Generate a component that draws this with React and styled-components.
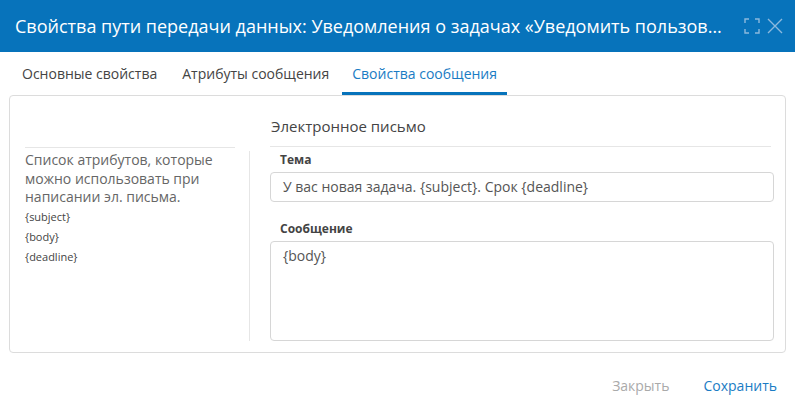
import styled, { createGlobalStyle } from "styled-components";

const GlobalStyle = createGlobalStyle`
    html, body {
        margin: 0;
        padding: 0;
        background: #fff;
    }
    body {
        font-family: "Open Sans", "Liberation Sans", sans-serif;
        color: #444;
    }
`;

const Dialog = styled.div`
    width: 795px;
    height: 409px;
    display: flex;
    flex-direction: column;
    background: #fff;
`;

const Header = styled.div`
    height: 52px;
    display: flex;
    align-items: center;
    justify-content: space-between;
    background: #0773bb;
    padding: 0 12px 0 15px;
    box-sizing: border-box;
`;

const Title = styled.div`
    font-size: 18px;
    font-weight: 500;
    color: #fff;
    white-space: nowrap;
    overflow: hidden;
    text-overflow: ellipsis;
    width: 708px;
`;

const HeaderTools = styled.div`
    display: flex;
    align-items: center;
    gap: 7px;
`;

const ToolButton = styled.div`
    display: flex;
    align-items: center;
    justify-content: center;
    width: 16px;
    height: 16px;
`;

const Tabs = styled.div`
    display: flex;
    height: 43px;
    padding-left: 10px;
    align-items: stretch;
`;

const Tab = styled.div`
    display: flex;
    align-items: center;
    padding: 3px ${p => (p.active ? "10px" : "12px")} 0;
    margin-right: ${p => (p.active ? "0" : "1px")};
    font-size: 14px;
    color: ${p => (p.active ? "#1a7cc4" : "#444")};
    border-bottom: 3px solid ${p => (p.active ? "#0773bb" : "transparent")};
`;

const Panel = styled.div`
    margin: 0 9px;
    height: 258px;
    box-sizing: border-box;
    border: 1px solid #dcdcdc;
    border-radius: 4px;
    padding: 0 11px 11px 15px;
    display: flex;
`;

const LeftCol = styled.div`
    width: 225px;
    display: flex;
    flex-direction: column;
`;

const LeftHead = styled.div`
    height: 51px;
    margin-right: 15px;
    border-bottom: 1px solid #e6e6e6;
`;

const LeftBody = styled.div`
    flex: 1;
    margin-top: 3px;
    border-right: 1px solid #e6e6e6;
    padding-right: 14px;
`;

const Hint = styled.div`
    font-size: 14px;
    line-height: 18.6px;
    color: #666;
`;

const Attribute = styled.div`
    font-size: 11px;
    line-height: 20px;
    color: #444;
`;

const RightCol = styled.div`
    flex: 1;
    margin-left: 20px;
    display: flex;
    flex-direction: column;
`;

const Section = styled.div`
    height: 51px;
    box-sizing: border-box;
    display: flex;
    align-items: flex-end;
    padding: 0 0 10px 1px;
    margin-right: 3px;
    border-bottom: 1px solid #e6e6e6;
    font-size: 15px;
    color: #444;
`;

const Label = styled.div`
    font-size: 12px;
    font-weight: 700;
    line-height: 16px;
    color: #444;
    padding-left: 10px;
    margin-top: ${p => p.top}px;
    margin-bottom: 4px;
`;

const Field = styled.div`
    height: ${p => p.height}px;
    box-sizing: border-box;
    border: 1px solid #d6d6d6;
    border-radius: 4px;
    padding: ${p => (p.multiline ? "4px 12px" : "0 12px")};
    display: flex;
    align-items: ${p => (p.multiline ? "flex-start" : "center")};
    font-size: 14px;
    color: #555;
`;

const Footer = styled.div`
    flex: 1;
    display: flex;
    justify-content: flex-end;
    align-items: center;
    gap: 34px;
    padding: 8px 18px 0 0;
`;

const Action = styled.div`
    font-size: 14px;
    color: ${p => (p.primary ? "#1a7cc4" : "#aaa")};
`;

function MaximizeIcon() {
    return (
        <svg width="16" height="16" viewBox="0 0 16 16" fill="none" stroke="#8cb9dd" strokeWidth="1.4">
            <path d="M1 5V1h4" />
            <path d="M11 1h4v4" />
            <path d="M15 11v4h-4" />
            <path d="M5 15H1v-4" />
        </svg>
    );
}

function CloseIcon() {
    return (
        <svg width="16" height="16" viewBox="0 0 16 16" fill="none" stroke="#8cb9dd" strokeWidth="1.4">
            <path d="M1 1l14 14M15 1L1 15" />
        </svg>
    );
}

export default function App() {
    const tabs = ["Основные свойства", "Атрибуты сообщения", "Свойства сообщения"];
    const attributes = ["{subject}", "{body}", "{deadline}"];

    return (
        <>
            <GlobalStyle />
            <Dialog>
                <Header>
                    <Title>Свойства пути передачи данных: Уведомления о задачах «Уведомить пользователя»</Title>
                    <HeaderTools>
                        <ToolButton><MaximizeIcon /></ToolButton>
                        <ToolButton><CloseIcon /></ToolButton>
                    </HeaderTools>
                </Header>
                <Tabs>
                    {tabs.map((tab, index) => (
                        <Tab key={tab} active={index === 2}>{tab}</Tab>
                    ))}
                </Tabs>
                <Panel>
                    <LeftCol>
                        <LeftHead />
                        <LeftBody>
                            <Hint>Список атрибутов, которые можно использовать при написании эл. письма.</Hint>
                            {attributes.map(attr => (
                                <Attribute key={attr}>{attr}</Attribute>
                            ))}
                        </LeftBody>
                    </LeftCol>
                    <RightCol>
                        <Section>Электронное письмо</Section>
                        <Label top={5}>Тема</Label>
                        <Field height={30}>У вас новая задача. {"{subject}"}. Срок {"{deadline}"}</Field>
                        <Label top={19}>Сообщение</Label>
                        <Field height={101} multiline>{"{body}"}</Field>
                    </RightCol>
                </Panel>
                <Footer>
                    <Action>Закрыть</Action>
                    <Action primary>Сохранить</Action>
                </Footer>
            </Dialog>
        </>
    );
}
